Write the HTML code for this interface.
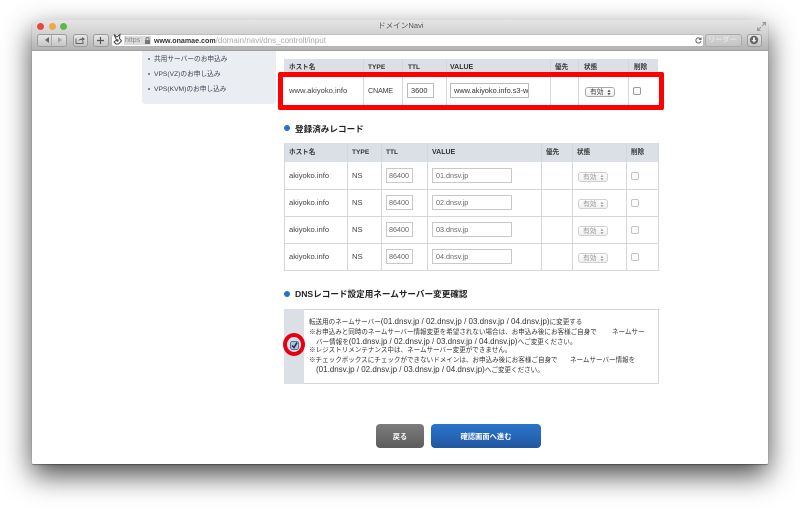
<!DOCTYPE html>
<html><head><meta charset="utf-8">
<style>
html,body{margin:0;padding:0;background:#fff}
body{width:800px;height:510px;overflow:hidden;position:relative;font-family:"Liberation Sans","Noto Sans CJK JP",sans-serif;color:#444;filter:blur(.3px)}
.a{position:absolute;white-space:nowrap}
#win{position:absolute;left:32px;top:20px;width:736px;height:444px;background:#fff;border-radius:4px 4px 1px 1px;box-shadow:0 11px 28px rgba(0,0,0,.72),0 1px 1px rgba(0,0,0,.35)}
#bar{position:absolute;left:32px;top:20px;width:736px;height:31px;border-radius:4px 4px 0 0;background:linear-gradient(#e4e4e4,#d4d4d4 40%,#b2b2b2);border-bottom:1px solid #a0a0a0;box-sizing:border-box}
.btn{position:absolute;top:34px;height:11px;border:1px solid #9c9c9c;border-radius:3px;background:linear-gradient(#e6e6e6,#c6c6c6);box-sizing:content-box}
.dot{position:absolute;top:23px;width:7px;height:7px;border-radius:50%}
.v{position:absolute;width:1px;background:#d4d8dd}
.h{position:absolute;height:1px;background:#d4d8dd}
.hd{position:absolute;background:#dbe0e6}
.th{position:absolute;font-size:6.6px;line-height:10px;font-weight:bold;color:#333;white-space:nowrap}
.td{position:absolute;font-size:7.6px;line-height:10px;color:#444;white-space:nowrap}
.in{position:absolute;height:15px;border:1px solid #c8c8c8;background:#fff;box-sizing:border-box;font-size:7.200px;line-height:13px;padding-left:3px;color:#666;white-space:nowrap;overflow:hidden}
.sel{position:absolute;width:24px;height:8px;border:1px solid #d0d0d0;border-radius:3px;background:linear-gradient(#fff,#efefef);font-size:6.8px;line-height:9px;color:#999;padding-left:4px;box-sizing:content-box;white-space:nowrap}
.sel.on{border-color:#aaa;color:#444}
.sel svg{position:absolute;right:3px;top:1px}
.cb{position:absolute;width:6px;height:6px;border:1px solid #c4c4c4;border-radius:2px;background:#fbfbfb}
.cb.on{border-color:#999}
.h2{position:absolute;font-size:8.6px;line-height:12px;font-weight:bold;color:#222;white-space:nowrap}
.bl{position:absolute;width:6px;height:6px;border-radius:50%;background:#2a6fc9}
.p{position:absolute;font-size:6.55px;line-height:10px;color:#333;white-space:nowrap}
.p i{font-style:normal;font-size:8px}
.sb{position:absolute;font-size:6.700px;line-height:11px;color:#445;white-space:nowrap;left:154px}
.bu{position:absolute;left:148px;width:2px;height:2px;border-radius:50%;background:#667}
</style></head><body>
<div id="win"></div>
<div id="bar"></div>
<div class="dot" style="left:37px;background:#e8473f"></div>
<div class="dot" style="left:49px;background:#f0a93a"></div>
<div class="dot" style="left:60px;background:#5fb84c"></div>
<div class="a" style="left:378px;top:21px;font-size:7.600px;line-height:10px;color:#555">ドメインNavi</div>
<svg class="a" style="left:757px;top:22px" width="9" height="9" viewBox="0 0 9 9"><path d="M5 0h4v4zM0 9V5l4 4z" fill="#999"/><path d="M7 2L5 4M2 7l2-2" stroke="#999"/></svg>

<div class="btn" style="left:37px;width:28px"></div>
<div class="a" style="left:51px;top:35px;width:1px;height:11px;background:#a8a8a8"></div>
<svg class="a" style="left:45px;top:37px" width="17" height="6" viewBox="0 0 17 6"><path d="M4 0v6L0 3z" fill="#666"/><path d="M13 0v6l4-3z" fill="#a4a4a4"/></svg>
<div class="btn" style="left:73px;width:13px"></div>
<svg class="a" style="left:75px;top:36px" width="10" height="8" viewBox="0 0 10 8"><path d="M1 2.500V7.500h7V5" fill="none" stroke="#666"/><path d="M3 5c.7-1.500 2-2.500 4-2.500V1l3 2-3 2.200V4C5 4 4 4.300 3 5z" fill="#666"/></svg>
<div class="btn" style="left:93px;width:14px"></div>
<svg class="a" style="left:97px;top:37px" width="7" height="7" viewBox="0 0 7 7"><path d="M3.500 0v7M0 3.500h7" stroke="#555" stroke-width="1.200"/></svg>

<div class="a" style="left:112px;top:35px;width:591px;height:11px;background:#fff;border-radius:2px;box-shadow:0 0 0 .5px #b0b0b0"></div>
<div class="a" style="left:124px;top:36px;width:27px;height:9px;background:#dcdcdc"></div>
<svg class="a" style="left:112px;top:33px" width="11" height="13" viewBox="0 0 11 13"><path d="M2 1.500l3 2.500 3-2.500-.5 4 2 2.500-3 3H4L2 9l2.500-2z" fill="none" stroke="#444" stroke-width="1"/><circle cx="5.500" cy="7.500" r="1.200" fill="#444"/></svg>
<div class="a" style="left:125px;top:36px;font-size:7px;color:#888;line-height:10px">https</div>
<svg class="a" style="left:145px;top:37px" width="5" height="7" viewBox="0 0 5 7"><path d="M1 3V2a1.500 1.500 0 0 1 3 0v1" fill="none" stroke="#777"/><rect y="3" width="5" height="4" fill="#777"/></svg>
<div class="a" style="left:154px;top:36px;font-size:8px;line-height:10px;color:#aaa"><b style="color:#333;font-weight:bold;font-size:7.100px">www.onamae.com</b>/domain/navi/dns_controll/input</div>
<svg class="a" style="left:695px;top:37px" width="7" height="7" viewBox="0 0 7 7"><path d="M5.700 2.200A2.600 2.600 0 1 0 6 4" fill="none" stroke="#666"/><path d="M6.500 0v3H3.500z" fill="#666"/></svg>
<div class="btn" style="left:705px;width:35px;background:linear-gradient(#d4d4d4,#c4c4c4);border-color:#aaa"></div>
<div class="a" style="left:708px;top:35px;font-size:7.200px;line-height:10px;color:#eee">リーダー</div>
<div class="btn" style="left:747px;width:13px"></div>
<svg class="a" style="left:749px;top:35px" width="10" height="10" viewBox="0 0 10 10"><circle cx="5" cy="5" r="4.200" fill="#666"/><path d="M4 2.500h2V5h1.500L5 7.500 2.500 5H4z" fill="#eee"/></svg>

<!-- sidebar -->
<div class="a" style="left:142px;top:51px;width:134px;height:53px;background:#eaedf2;border-radius:0 0 3px 3px"></div>
<div class="bu" style="top:58px"></div>
<div class="sb" style="top:54px">共用サーバーのお申込み</div>
<div class="bu" style="top:73px"></div>
<div class="sb" style="top:69px">VPS(VZ)のお申し込み</div>
<div class="bu" style="top:88px"></div>
<div class="sb" style="top:84px">VPS(KVM)のお申し込み</div>

<!-- table 1 -->
<div class="hd" style="left:284px;top:59px;width:374px;height:18px"></div>
<div class="th" style="left:289px;top:63px">ホスト名</div>
<div class="th" style="left:368px;top:63px">TYPE</div>
<div class="th" style="left:408px;top:63px">TTL</div>
<div class="th" style="left:450px;top:63px;font-size:7px">VALUE</div>
<div class="th" style="left:555px;top:63px">優先</div>
<div class="th" style="left:584px;top:63px">状態</div>
<div class="th" style="left:634px;top:63px">削除</div>
<div class="v" style="left:363px;top:59px;height:47px"></div>
<div class="v" style="left:402px;top:59px;height:47px"></div>
<div class="v" style="left:446px;top:59px;height:47px"></div>
<div class="v" style="left:550px;top:59px;height:47px"></div>
<div class="v" style="left:578px;top:59px;height:47px"></div>
<div class="v" style="left:628px;top:59px;height:47px"></div>
<div class="h" style="left:284px;top:105px;width:374px"></div>
<div class="td" style="left:289px;top:86px">www.akiyoko.info</div>
<div class="td" style="left:368px;top:86px;font-size:7.300px;letter-spacing:-.3px">CNAME</div>
<div class="in" style="left:407px;top:83px;width:27px;border-color:#bbb;color:#333;font-size:7.400px">3600</div>
<div class="in" style="left:450px;top:83px;width:79px;border-color:#bbb;color:#333;font-size:7.400px">www.akiyoko.info.s3-we</div>
<div class="sel on" style="left:585px;top:87px">有効<svg width="4" height="7" viewBox="0 0 4 7"><path d="M2 .5L3.500 3H.5zM2 6.500L3.500 4H.5z" fill="#555"/></svg></div>
<div class="cb on" style="left:633px;top:87px"></div>
<div class="a" style="left:278px;top:72px;width:386px;height:38px;border:5px solid #f00;border-radius:2px;box-sizing:border-box"></div>

<!-- table 2 -->
<div class="bl" style="left:284px;top:125px"></div>
<div class="h2" style="left:295px;top:123px">登録済みレコード</div>
<div class="hd" style="left:284px;top:143px;width:374px;height:19px"></div>
<div class="th" style="left:289px;top:148px">ホスト名</div>
<div class="th" style="left:352px;top:148px">TYPE</div>
<div class="th" style="left:386px;top:148px">TTL</div>
<div class="th" style="left:432px;top:148px;font-size:7px">VALUE</div>
<div class="th" style="left:546px;top:148px">優先</div>
<div class="th" style="left:577px;top:148px">状態</div>
<div class="th" style="left:631px;top:148px">削除</div>
<div class="v" style="left:284px;top:143px;height:128px"></div>
<div class="v" style="left:347px;top:143px;height:128px"></div>
<div class="v" style="left:381px;top:143px;height:128px"></div>
<div class="v" style="left:427px;top:143px;height:128px"></div>
<div class="v" style="left:541px;top:143px;height:128px"></div>
<div class="v" style="left:572px;top:143px;height:128px"></div>
<div class="v" style="left:626px;top:143px;height:128px"></div>
<div class="v" style="left:658px;top:143px;height:128px"></div>
<div class="h" style="left:284px;top:189px;width:374px"></div>
<div class="h" style="left:284px;top:216px;width:374px"></div>
<div class="h" style="left:284px;top:243px;width:374px"></div>
<div class="h" style="left:284px;top:270px;width:374px"></div>

<div class="td" style="left:289px;top:171px">akiyoko.info</div><div class="td" style="left:352px;top:171px">NS</div>
<div class="in" style="left:386px;top:168px;width:27px;padding-left:2px">86400</div><div class="in" style="left:432px;top:168px;width:80px">01.dnsv.jp</div>
<div class="sel" style="left:578px;top:172px">有効<svg width="4" height="7" viewBox="0 0 4 7"><path d="M2 .5L3.500 3H.5zM2 6.500L3.500 4H.5z" fill="#aaa"/></svg></div><div class="cb" style="left:631px;top:172px"></div>

<div class="td" style="left:289px;top:198px">akiyoko.info</div><div class="td" style="left:352px;top:198px">NS</div>
<div class="in" style="left:386px;top:195px;width:27px;padding-left:2px">86400</div><div class="in" style="left:432px;top:195px;width:80px">02.dnsv.jp</div>
<div class="sel" style="left:578px;top:199px">有効<svg width="4" height="7" viewBox="0 0 4 7"><path d="M2 .5L3.500 3H.5zM2 6.500L3.500 4H.5z" fill="#aaa"/></svg></div><div class="cb" style="left:631px;top:199px"></div>

<div class="td" style="left:289px;top:225px">akiyoko.info</div><div class="td" style="left:352px;top:225px">NS</div>
<div class="in" style="left:386px;top:222px;width:27px;padding-left:2px">86400</div><div class="in" style="left:432px;top:222px;width:80px">03.dnsv.jp</div>
<div class="sel" style="left:578px;top:226px">有効<svg width="4" height="7" viewBox="0 0 4 7"><path d="M2 .5L3.500 3H.5zM2 6.500L3.500 4H.5z" fill="#aaa"/></svg></div><div class="cb" style="left:631px;top:226px"></div>

<div class="td" style="left:289px;top:252px">akiyoko.info</div><div class="td" style="left:352px;top:252px">NS</div>
<div class="in" style="left:386px;top:249px;width:27px;padding-left:2px">86400</div><div class="in" style="left:432px;top:249px;width:80px">04.dnsv.jp</div>
<div class="sel" style="left:578px;top:253px">有効<svg width="4" height="7" viewBox="0 0 4 7"><path d="M2 .5L3.500 3H.5zM2 6.500L3.500 4H.5z" fill="#aaa"/></svg></div><div class="cb" style="left:631px;top:253px"></div>

<!-- confirm -->
<div class="bl" style="left:284px;top:291px"></div>
<div class="h2" style="left:295px;top:288px">DNSレコード設定用ネームサーバー変更確認</div>
<div class="a" style="left:284px;top:309px;width:375px;height:75px;border:1px solid #d4d8dd;box-sizing:border-box"></div>
<div class="a" style="left:284px;top:309px;width:20px;height:75px;background:#dbe0e6"></div>
<div class="p" style="left:309px;top:317px">転送用のネームサーバー<i>(01.dnsv.jp / 02.dnsv.jp / 03.dnsv.jp / 04.dnsv.jp)</i>に変更する</div>
<div class="p" style="left:309px;top:328px">※お申込みと同時のネームサーバー情報変更を希望されない場合は、お申込み後にお客様ご自身で</div>
<div class="p" style="left:612px;top:328px">ネームサー</div>
<div class="p" style="left:316px;top:337px">バー情報を<i>(01.dnsv.jp / 02.dnsv.jp / 03.dnsv.jp / 04.dnsv.jp)</i>へご変更ください。</div>
<div class="p" style="left:309px;top:346px">※レジストリメンテナンス中は、ネームサーバー変更ができません。</div>
<div class="p" style="left:309px;top:356px">※チェックボックスにチェックができないドメインは、お申込み後にお客様ご自身で</div>
<div class="p" style="left:570px;top:356px">ネームサーバー情報を</div>
<div class="p" style="left:316px;top:365px"><i>(01.dnsv.jp / 02.dnsv.jp / 03.dnsv.jp / 04.dnsv.jp)</i>へご変更ください。</div>
<div class="a" style="left:283px;top:333px;width:22px;height:23px;border:4px solid #e60012;border-radius:50%;box-sizing:border-box"></div>
<svg class="a" style="left:290px;top:341px" width="9" height="9" viewBox="0 0 9 9"><rect x=".5" y=".5" width="8" height="8" rx="2" fill="#a9c6ea" stroke="#56729a"/><path d="M2 4.500l2 2L7 1.500" fill="none" stroke="#1c2a44" stroke-width="1.500"/></svg>

<!-- buttons -->
<div class="a" style="left:376px;top:424px;width:48px;height:24px;border-radius:4px;background:linear-gradient(#7c7c7c,#5c5c5c);color:#fff;font-size:7.200px;font-weight:bold;line-height:25px;text-align:center">戻る</div>
<div class="a" style="left:431px;top:424px;width:110px;height:24px;border-radius:4px;background:linear-gradient(#2b74cd,#20589f);color:#fff;font-size:7.300px;font-weight:bold;line-height:25px;text-align:center">確認画面へ進む</div>
</body></html>
